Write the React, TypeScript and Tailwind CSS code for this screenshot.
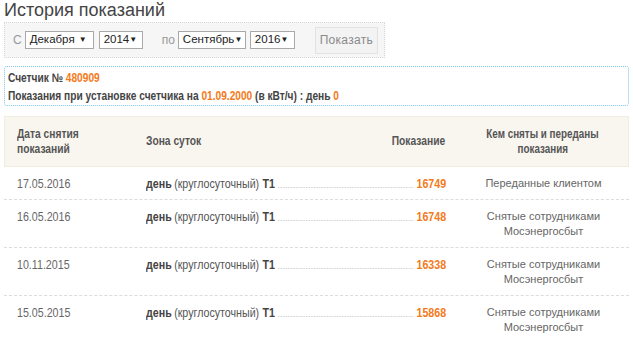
const rows = [
  { date: "17.05.2016", value: "16749", who: ["Переданные клиентом"] },
  { date: "16.05.2016", value: "16748", who: ["Снятые сотрудниками", "Мосэнергосбыт"] },
  { date: "10.11.2015", value: "16338", who: ["Снятые сотрудниками", "Мосэнергосбыт"] },
  { date: "15.05.2015", value: "15868", who: ["Снятые сотрудниками", "Мосэнергосбыт"] },
];

// Arial Narrow is not installed: squeeze Liberation Sans instead
const narrow = "inline-block whitespace-nowrap scale-x-[0.82]";

const FakeSelect = ({ label, width }: { label: string; width: string }) => (
  <div
    className={`flex h-[18px] ${width} items-center justify-between border border-[#a9a9a9] bg-white pl-[4px] pr-[6px] text-[11.5px] leading-none text-[#222]`}
  >
    <span>{label}</span>
    <span className="text-[8px]">▼</span>
  </div>
);

export default function App() {
  return (
    <div className="h-[345px] w-[633px] overflow-hidden bg-white font-['Liberation_Sans',Arial,sans-serif] text-[#555]">
      <h1 className="pl-[4px] text-[18px] leading-[20px] text-[#444]">История показаний</h1>

      {/* фильтр по периоду */}
      <div className="ml-[4px] mt-[2px] flex h-[36px] w-[381px] items-center border border-dotted border-[#d8d8d8] bg-[#f6f6f6] pl-[8px]">
        <span className="mr-[3px] text-[12px] text-[#999]">С</span>
        <FakeSelect label="Декабря" width="w-[69px]" />
        <div className="w-[5px]" />
        <FakeSelect label="2014" width="w-[44px]" />
        <span className="ml-[19px] mr-[3px] text-[12px] text-[#999]">по</span>
        <FakeSelect label="Сентябрь" width="w-[68px]" />
        <div className="w-[4px]" />
        <FakeSelect label="2016" width="w-[45px]" />
        <button className="ml-[20px] h-[27px] w-[63px] border border-[#e2e2e2] bg-[#f3f3f3] text-[12px] tracking-[0.3px] text-[#8a8a8a]">
          Показать
        </button>
      </div>

      {/* информация о счетчике */}
      <div className="mx-[4px] mt-[8px] h-[40px] rounded-[3px] border border-dotted border-[#7cc4ea] px-[3px] pt-[2px] text-[12.4px] font-bold leading-[18px] text-[#444]">
        <div>
          <span className={`${narrow} origin-left`}>
            Счетчик № <span className="text-[#f47a20]">480909</span>
          </span>
        </div>
        <div>
          <span className={`${narrow} origin-left`}>
            Показания при установке счетчика на <span className="text-[#f47a20]">01.09.2000</span> (в кВт/ч) : день{" "}
            <span className="text-[#f47a20]">0</span>
          </span>
        </div>
      </div>

      {/* таблица */}
      <div className="mx-[4px] mt-[10px]">
        <div className="flex h-[51px] items-center border border-[#f1ece0] bg-[#f9f6ef] text-[12.5px] font-bold leading-[15px] text-[#555]">
          <div className="w-[141px] pl-[12px]">
            <span className={`${narrow} origin-left`}>Дата снятия</span>
            <br />
            <span className={`${narrow} origin-left`}>показаний</span>
          </div>
          <div className="flex w-[300px] justify-between">
            <span className={`${narrow} origin-left`}>Зона суток</span>
            <span className={`${narrow} origin-right`}>Показание</span>
          </div>
          <div className="ml-[12px] w-[171px] text-center text-[12px]">
            <span className={narrow}>Кем сняты и переданы</span>
            <br />
            <span className={narrow}>показания</span>
          </div>
        </div>

        {rows.map((r, i) => (
          <div
            key={i}
            className={`flex pb-[8px] pt-[9px] leading-[15px] ${i < rows.length - 1 ? "border-b border-dashed border-[#dcdcdc]" : ""}`}
          >
            <div className="w-[142px] pl-[13px] text-[13px] text-[#666]">
              <span className={`${narrow} origin-left`}>{r.date}</span>
            </div>
            <div className="w-[300px]">
              <div className="flex w-[366px] origin-left scale-x-[0.82] items-baseline text-[13px] text-[#555]">
                <b className="text-[#444]">день</b>
                <span className="ml-[3px]">(круглосуточный)</span>
                <b className="ml-[4px] text-[#444]">T1</b>
                <span className="mx-[4px] flex-1 border-b border-dotted border-[#c8c8c8]" />
                <b className="text-[#f47a20]">{r.value}</b>
              </div>
            </div>
            <div className="ml-[12px] w-[171px] text-center text-[11px] text-[#666]">
              {r.who.map((w, j) => (
                <div key={j}>{w}</div>
              ))}
            </div>
          </div>
        ))}
      </div>
    </div>
  );
}
